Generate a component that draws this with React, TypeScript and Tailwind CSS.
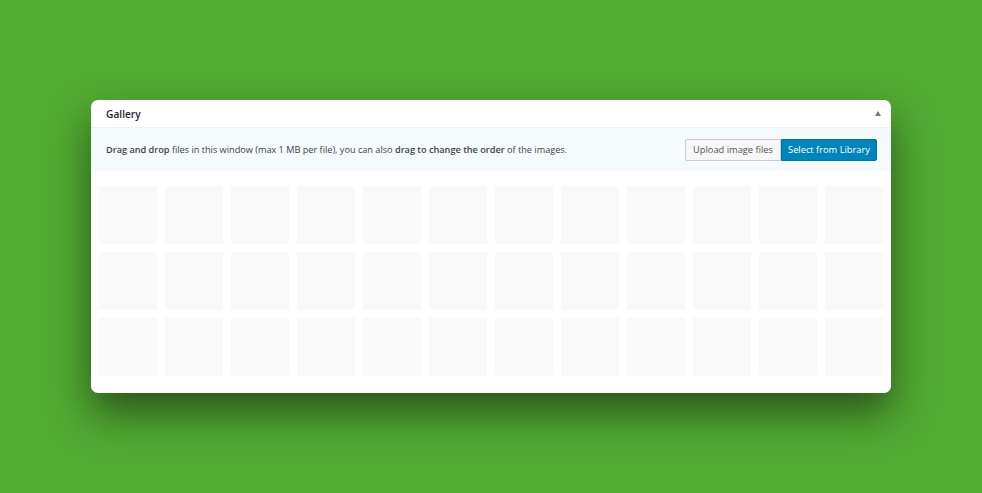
import React from "react";

export default function App() {
  const tiles = Array.from({ length: 36 });
  return (
    <div
      className="w-[982px] h-[493px] bg-[#52ab33] flex justify-center pt-[100px]"
      style={{ fontFamily: '"Open Sans", "Liberation Sans", sans-serif' }}
    >
      <div className="w-[800px] h-[293px] bg-white rounded-[7px] shadow-[0_20px_40px_rgba(0,0,0,0.5)] flex flex-col overflow-hidden">
        <div className="h-[28px] flex items-center justify-between pl-[15px] pr-[10px] border-b border-[#eef0f1]">
          <span className="text-[10.2px] font-semibold text-[#23282d] leading-none mt-[2px]">Gallery</span>
          <span className="w-0 h-0 border-l-[3.5px] border-r-[3.5px] border-b-[5px] border-l-transparent border-r-transparent border-b-[#72777c] mb-[1px]" />
        </div>
        <div className="h-[43px] bg-[#f5fafd] flex items-center justify-between pl-[15px] pr-[14px]">
          <p className="text-[9.2px] text-[#444] whitespace-nowrap tracking-[-0.02px]">
            <span className="font-semibold">Drag and drop</span> files in this window (max 1 MB per file), you can also{" "}
            <span className="font-semibold">drag to change the order</span> of the images.
          </p>
          <div className="flex">
            <button className="h-[22px] w-[96px] text-[9.3px] text-[#555] bg-[#f7f7f7] border border-[#cccccc] rounded-l-[2px] whitespace-nowrap">
              Upload image files
            </button>
            <button className="h-[22px] w-[96px] text-[9.3px] text-white bg-[#0085ba] border border-[#0073aa] rounded-r-[2px] whitespace-nowrap">
              Select from Library
            </button>
          </div>
        </div>
        <div className="grid grid-cols-[repeat(12,58px)] gap-[8px] pl-[8px] pt-[15px]">
          {tiles.map((_, i) => (
            <div key={i} className="w-[58px] h-[58px] bg-[#f9f9f9] rounded-[1px]" />
          ))}
        </div>
      </div>
    </div>
  );
}
